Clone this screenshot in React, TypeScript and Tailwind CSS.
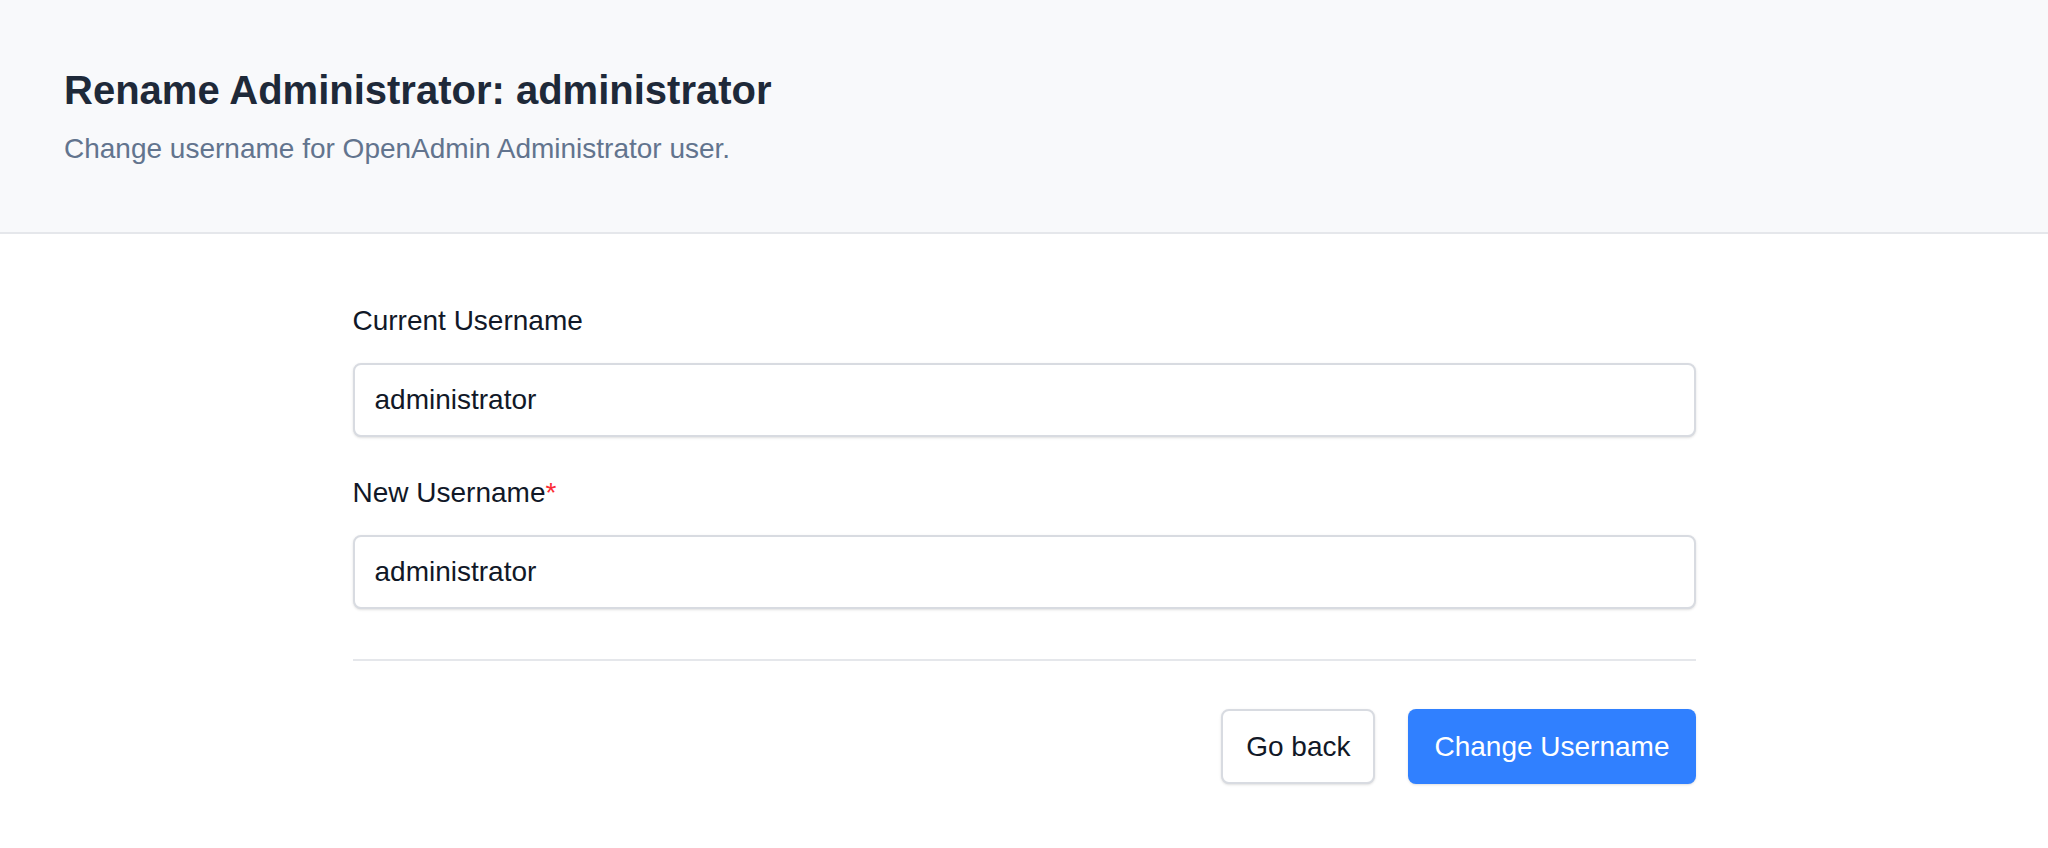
import React, { useState } from 'react';

const RenameAdministrator: React.FC = () => {
  const [newUsername, setNewUsername] = useState('administrator');

  return (
    <div className="min-h-screen bg-white font-['Liberation_Sans',Arial,sans-serif] text-[#111827]">
      <header className="border-b-2 border-[#e5e7eb] bg-[#f8f9fb] px-[64px] pb-[63px] pt-[66px]">
        <h1 className="text-[40px] font-bold leading-[48px] text-[#1e2939]">Rename Administrator: administrator</h1>
        <p className="mt-[15px] text-[28px] leading-[40px] text-[#62748e]">
          Change username for OpenAdmin Administrator user.
        </p>
      </header>

      <main className="mx-auto w-[1343px] pt-[66px]">
        <label className="block text-[28px] leading-[42px]">Current Username</label>
        <input
          value="administrator"
          readOnly
          className="mt-[21px] block h-[74px] w-full rounded-[8px] border-2 border-[#d8dbe1] bg-white px-[20px] text-[28px] leading-[42px] text-[#111827] shadow-sm outline-none"
        />

        <label className="mt-[35px] block text-[28px] leading-[42px]">
          New Username<span className="text-[#fb2c36]">*</span>
        </label>
        <input
          value={newUsername}
          onChange={(e) => setNewUsername(e.target.value)}
          className="mt-[21px] block h-[74px] w-full rounded-[8px] border-2 border-[#d8dbe1] bg-white px-[20px] text-[28px] leading-[42px] text-[#111827] shadow-sm outline-none"
        />

        <div className="mt-[50px] h-[2px] bg-[#e5e7eb]" />

        <div className="mt-[48px] flex justify-end gap-[33px]">
          <button className="flex h-[75px] items-center rounded-[8px] border-2 border-[#d8dbe1] bg-white px-[23px] text-[28px] text-[#111827] shadow-sm">
            Go back
          </button>
          <button className="flex h-[75px] items-center rounded-[8px] bg-[#3080ff] px-[26px] text-[28px] text-white shadow-sm">
            Change Username
          </button>
        </div>
      </main>
    </div>
  );
};

export default RenameAdministrator;
